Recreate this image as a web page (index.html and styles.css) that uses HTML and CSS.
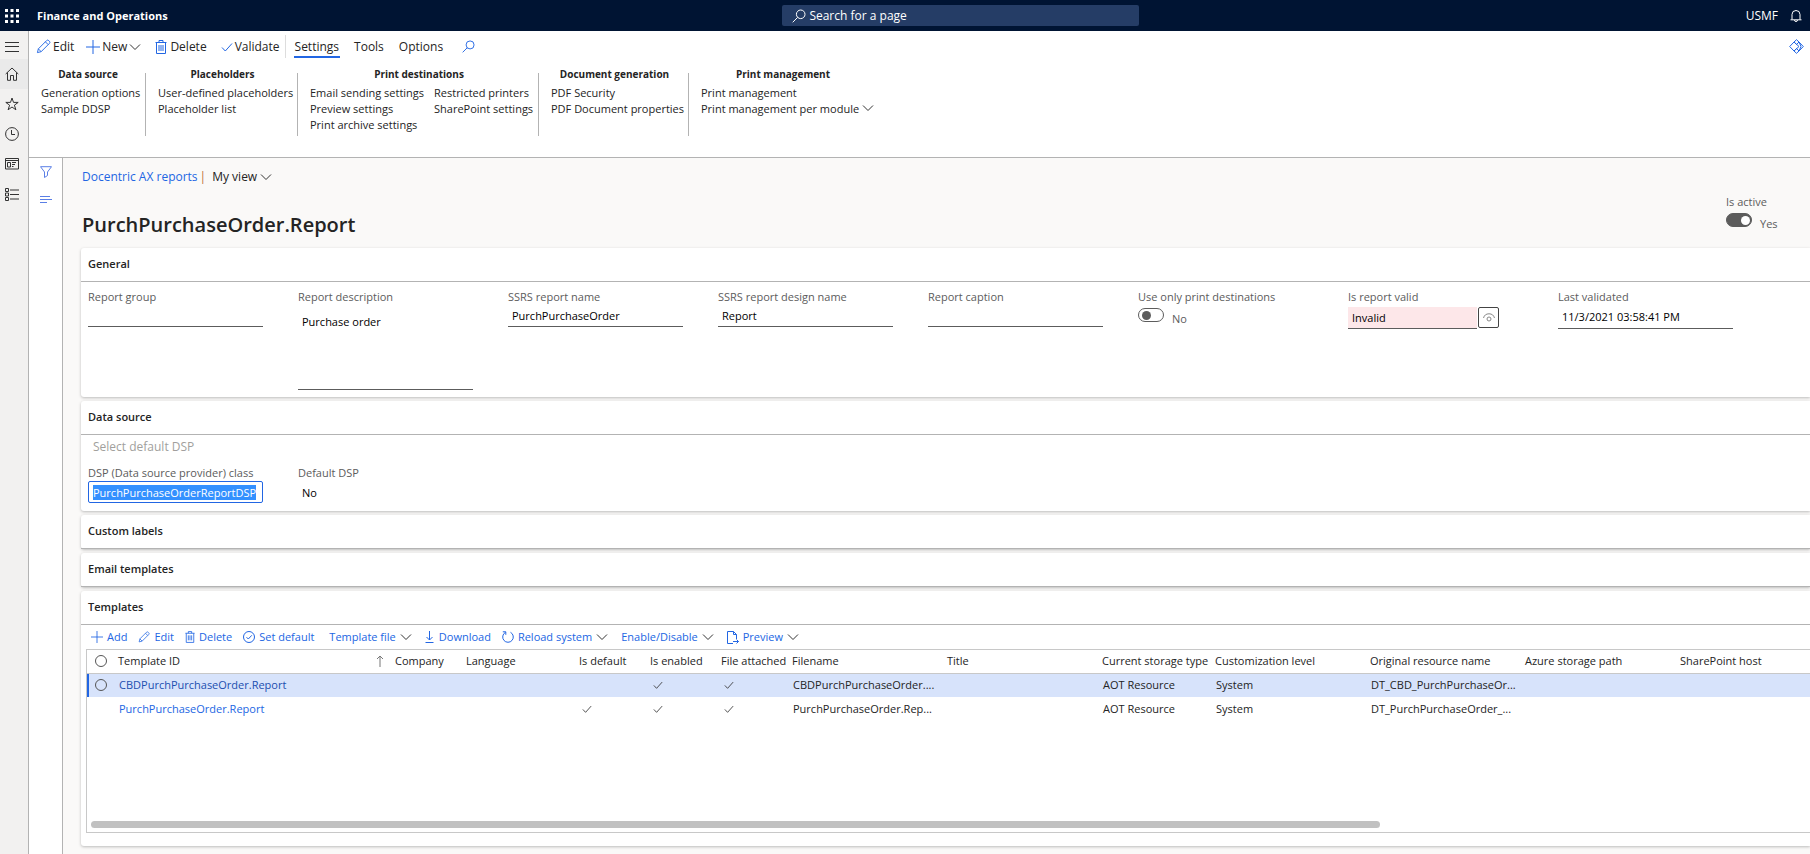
FILE: index.html
```
<!DOCTYPE html>
<html lang="en">
<head>
  <meta charset="UTF-8">
  <meta name="viewport" content="width=device-width, initial-scale=1.0">
  <title>Finance and Operations</title>
  <link rel="stylesheet" href="styles.css">
</head>

<body>

<!-- icons used more than once -->
<svg class="defs" aria-hidden="true">
  <symbol id="i-chevron" viewBox="0 0 12 12"><path d="M1 3.5l5 5 5-5"/></symbol>
  <symbol id="i-pencil" viewBox="0 0 16 16"><path d="M1.5 14.5l1-4L11.3 1.7a1.6 1.6 0 0 1 2.3 0l.7.7a1.6 1.6 0 0 1 0 2.3L5.5 13.5zM10 3l3 3M2.5 10.5l3 3"/></symbol>
  <symbol id="i-plus" viewBox="0 0 14 14"><path d="M7 0v14M0 7h14"/></symbol>
  <symbol id="i-trash" viewBox="0 0 12 14"><path d="M.5 2.5h11M4 2.5V.5h4v2M1.5 2.5v11h9v-11M4 5v6M6 5v6M8 5v6"/></symbol>
  <symbol id="i-search" viewBox="0 0 14 14"><circle cx="8.7" cy="5.3" r="4.3"/><path d="M5.7 8.3L.7 13.3"/></symbol>
  <symbol id="i-check" viewBox="0 0 12 12"><path d="M1 6.5L4.3 10 11 2.5"/></symbol>
</svg>

<header class="topbar">
  <button class="waffle" aria-label="App launcher">
    <svg width="14" height="14" viewBox="0 0 14 14"><path d="M0 0h3v3H0zM5.5 0h3v3h-3zM11 0h3v3h-3zM0 5.5h3v3H0zM5.5 5.5h3v3h-3zM11 5.5h3v3h-3zM0 11h3v3H0zM5.5 11h3v3h-3zM11 11h3v3h-3z"/></svg>
  </button>
  <span class="brand">Finance and Operations</span>
  <div class="page-search">
    <svg class="icon" width="14" height="14"><use href="#i-search"/></svg>
    <input type="text" placeholder="Search for a page" aria-label="Search for a page">
  </div>
  <div class="topbar-right">
    <button class="company">USMF</button>
    <button class="bell" aria-label="Notifications">
      <svg class="icon" width="12" height="14" viewBox="0 0 12 14"><path d="M2 10.5v-5a4 4 0 0 1 8 0v5M.5 10.8h11M4.5 11a1.5 1.5 0 0 0 3 0"/></svg>
    </button>
  </div>
</header>

<div class="shell">

  <nav class="rail">
    <button class="rail-menu" aria-label="Expand navigation">
      <svg class="icon" width="14" height="10" viewBox="0 0 14 10"><path d="M0 .5h14M0 4.5h14M0 9.5h14"/></svg>
    </button>
    <button class="rail-item active" aria-label="Home">
      <svg class="icon" width="14" height="14" viewBox="0 0 14 14"><path d="M.7 7L7 1l6.3 6M2.5 5.5v7.8h3V8.5h3v4.8h3V5.5"/></svg>
    </button>
    <button class="rail-item" aria-label="Favorites">
      <svg class="icon" width="14" height="14" viewBox="0 0 14 14"><path d="M7 1l1.5 4.4h4.7L9.4 8.2l1.5 4.6L7 10l-3.9 2.8 1.5-4.6L.8 5.4h4.7z"/></svg>
    </button>
    <button class="rail-item" aria-label="Recent">
      <svg class="icon" width="14" height="14" viewBox="0 0 14 14"><circle cx="7" cy="7" r="6.4"/><path d="M6.5 3v4.5H10"/></svg>
    </button>
    <button class="rail-item" aria-label="Workspaces">
      <svg class="icon" width="14" height="12" viewBox="0 0 14 12"><path d="M.5.5h13v10.5H.5zM.5 2.5h13M2.5 4.5h3V9h-3zM7 4.5h4M7 6.5h3M7 8.5h1.5"/></svg>
    </button>
    <button class="rail-item" aria-label="Modules">
      <svg class="icon" width="14" height="13" viewBox="0 0 14 13"><path d="M.5.5h3v3h-3zM.5 5h3v3h-3zM.5 9.5h3v3h-3zM5 2h9M5 6.5h9M5 11h9"/></svg>
    </button>
  </nav>

  <div class="page">

    <div class="action-pane">
      <div class="commands">
        <button class="cmd"><svg class="icon" width="15" height="15"><use href="#i-pencil"/></svg>Edit</button>
        <button class="cmd cmd-new"><svg class="icon" width="14" height="14"><use href="#i-plus"/></svg>New<svg class="icon chevron" width="12" height="12"><use href="#i-chevron"/></svg></button>
        <button class="cmd cmd-delete"><svg class="icon" width="12" height="14"><use href="#i-trash"/></svg>Delete</button>
        <button class="cmd cmd-validate"><svg class="icon" width="12" height="12"><use href="#i-check"/></svg>Validate</button>
        <div class="tabs">
          <button class="tab selected">Settings</button>
          <button class="tab">Tools</button>
          <button class="tab">Options</button>
        </div>
        <button class="cmd" aria-label="Search actions"><svg class="icon" width="13" height="13"><use href="#i-search"/></svg></button>
        <button class="cmd cmd-apps" aria-label="Power Apps">
          <svg class="icon" width="15" height="15" viewBox="0 0 15 15"><path d="M5 3L.7 7.5 5 12M10 3l4.3 4.5L10 12M5 3L7.5.7 10 3 7.500 5.500zM5 12l2.500 2.300L10 12 7.500 9.500zM5 3l5 4.500L5 12M10 3l2 4.500-2 4.500"/></svg>
        </button>
      </div>

      <div class="ribbon">
        <section class="group group-ds">
          <h3>Data source</h3>
          <div class="group-cols">
            <div class="links">
              <a href="#">Generation options</a>
              <a href="#">Sample DDSP</a>
            </div>
          </div>
        </section>
        <section class="group group-ph">
          <h3>Placeholders</h3>
          <div class="group-cols">
            <div class="links">
              <a href="#">User-defined placeholders</a>
              <a href="#">Placeholder list</a>
            </div>
          </div>
        </section>
        <section class="group group-pd">
          <h3>Print destinations</h3>
          <div class="group-cols">
            <div class="links">
              <a href="#">Email sending settings</a>
              <a href="#">Preview settings</a>
              <a href="#">Print archive settings</a>
            </div>
            <div class="links">
              <a href="#">Restricted printers</a>
              <a href="#">SharePoint settings</a>
            </div>
          </div>
        </section>
        <section class="group group-dg">
          <h3>Document generation</h3>
          <div class="group-cols">
            <div class="links">
              <a href="#">PDF Security</a>
              <a href="#">PDF Document properties</a>
            </div>
          </div>
        </section>
        <section class="group group-pm">
          <h3>Print management</h3>
          <div class="group-cols">
            <div class="links">
              <a href="#">Print management</a>
              <a href="#">Print management per module <svg class="icon chevron" width="12" height="12"><use href="#i-chevron"/></svg></a>
            </div>
          </div>
        </section>
      </div>
    </div>

    <div class="workarea">
      <aside class="side">
        <button aria-label="Show filters">
          <svg class="icon" width="12" height="12" viewBox="0 0 12 12"><path d="M.5.7h11L7.5 6v3.500l-3 2V6z"/></svg>
        </button>
        <button aria-label="Show list">
          <svg class="icon" width="12" height="8" viewBox="0 0 12 8"><path d="M0 .5h10M0 3.500h12M0 6.500h7"/></svg>
        </button>
      </aside>

      <main class="content">
        <div class="crumbs">
          <a href="#">Docentric AX reports</a>
          <span class="bar">|</span>
          <button class="view">My view<svg class="icon chevron" width="12" height="12"><use href="#i-chevron"/></svg></button>
        </div>

        <div class="title-row">
          <h1>PurchPurchaseOrder.Report</h1>
          <div class="field is-active">
            <label for="isActive">Is active</label>
            <div class="toggle-row"><input class="toggle" type="checkbox" id="isActive" checked><span>Yes</span></div>
          </div>
        </div>

        <section class="card">
          <h2>General</h2>
          <div class="card-body fields">
            <div class="field">
              <label for="reportGroup">Report group</label>
              <input class="text" type="text" id="reportGroup">
            </div>
            <div class="field">
              <label for="reportDescription">Report description</label>
              <textarea class="text" id="reportDescription">Purchase order</textarea>
            </div>
            <div class="field">
              <label for="ssrsName">SSRS report name</label>
              <input class="text" type="text" id="ssrsName" value="PurchPurchaseOrder">
            </div>
            <div class="field">
              <label for="ssrsDesign">SSRS report design name</label>
              <input class="text" type="text" id="ssrsDesign" value="Report">
            </div>
            <div class="field">
              <label for="caption">Report caption</label>
              <input class="text" type="text" id="caption">
            </div>
            <div class="field">
              <label for="onlyDest">Use only print destinations</label>
              <div class="toggle-row"><input class="toggle" type="checkbox" id="onlyDest"><span>No</span></div>
            </div>
            <div class="field">
              <label for="isValid">Is report valid</label>
              <div class="with-button">
                <input class="text invalid" type="text" id="isValid" value="Invalid">
                <button class="eye" aria-label="Show validation details">
                  <svg class="icon" width="12" height="10" viewBox="0 0 12 10"><path d="M.5 5a5.700 5.700 0 0 1 11 0"/><circle cx="6" cy="6" r="2"/></svg>
                </button>
              </div>
            </div>
            <div class="field">
              <label for="lastValidated">Last validated</label>
              <input class="text tall" type="text" id="lastValidated" value="11/3/2021 03:58:41 PM">
            </div>
          </div>
        </section>

        <section class="card">
          <h2>Data source</h2>
          <div class="card-body source">
            <button class="select-dsp" disabled>Select default DSP</button>
            <div class="fields">
              <div class="field">
                <label for="dspClass">DSP (Data source provider) class</label>
                <input class="text focused" type="text" id="dspClass" value="PurchPurchaseOrderReportDSP">
              </div>
              <div class="field">
                <label for="defaultDsp">Default DSP</label>
                <input class="text plain" type="text" id="defaultDsp" value="No" readonly>
              </div>
            </div>
          </div>
        </section>

        <section class="card"><h2>Custom labels</h2></section>
        <section class="card"><h2>Email templates</h2></section>

        <section class="card">
          <h2>Templates</h2>
          <div class="toolbar">
            <button class="tool"><svg class="icon" width="12" height="12"><use href="#i-plus"/></svg>Add</button>
            <button class="tool"><svg class="icon" width="12" height="12"><use href="#i-pencil"/></svg>Edit</button>
            <button class="tool"><svg class="icon" width="10" height="12"><use href="#i-trash"/></svg>Delete</button>
            <button class="tool"><svg class="icon" width="12" height="12" viewBox="0 0 12 12"><circle cx="6" cy="6" r="5.500"/><path d="M3.500 6.200l1.800 1.800 3.500-3.700"/></svg>Set default</button>
            <button class="tool tool-file tool-menu">Template file<svg class="icon chevron" width="12" height="12"><use href="#i-chevron"/></svg></button>
            <button class="tool"><svg class="icon" width="10" height="12" viewBox="0 0 10 12"><path d="M4.500 0v9M1.500 6l3 3 3-3M.5 11.500h8"/></svg>Download</button>
            <button class="tool tool-menu"><svg class="icon" width="12" height="12" viewBox="0 0 12 12"><path d="M3.500 1.300a5.300 5.300 0 1 0 5 0M.8.8h3v3"/></svg>Reload system<svg class="icon chevron" width="12" height="12"><use href="#i-chevron"/></svg></button>
            <button class="tool tool-menu">Enable/Disable<svg class="icon chevron" width="12" height="12"><use href="#i-chevron"/></svg></button>
            <button class="tool"><svg class="icon" width="12" height="13" viewBox="0 0 12 13"><path d="M9.500 8V3.500l-3-3h-6v12h5.500M6.500.5v3h3M6 10.500h5.500M9.500 8.500l2 2-2 2"/></svg>Preview<svg class="icon chevron" width="12" height="12"><use href="#i-chevron"/></svg></button>
          </div>

          <div class="grid">
            <table>
              <colgroup>
                <col class="c-radio"><col class="c-id"><col class="c-s"><col class="c-m">
                <col class="c-s"><col class="c-s"><col class="c-s"><col class="c-l"><col class="c-l">
                <col class="c-m"><col class="c-l"><col class="c-l"><col class="c-l"><col>
              </colgroup>
              <thead>
                <tr>
                  <th><input class="round" type="radio" name="all" aria-label="Select all rows"></th>
                  <th><div class="sorted">Template ID<svg class="icon" width="8" height="12" viewBox="0 0 8 12"><path d="M4 12V1M1 4l3-3 3 3"/></svg></div></th>
                  <th>Company</th>
                  <th>Language</th>
                  <th>Is default</th>
                  <th>Is enabled</th>
                  <th>File attached</th>
                  <th>Filename</th>
                  <th>Title</th>
                  <th>Current storage type</th>
                  <th>Customization level</th>
                  <th>Original resource name</th>
                  <th>Azure storage path</th>
                  <th>SharePoint host</th>
                </tr>
              </thead>
              <tbody>
                <tr class="current">
                  <td><input class="round" type="radio" name="row" aria-label="Select row"></td>
                  <td><a href="#">CBDPurchPurchaseOrder.Report</a></td>
                  <td></td>
                  <td></td>
                  <td></td>
                  <td><svg class="icon tick" width="10" height="10"><use href="#i-check"/></svg></td>
                  <td><svg class="icon tick" width="10" height="10"><use href="#i-check"/></svg></td>
                  <td>CBDPurchPurchaseOrder....</td>
                  <td></td>
                  <td>AOT Resource</td>
                  <td>System</td>
                  <td>DT_CBD_PurchPurchaseOr...</td>
                  <td></td>
                  <td></td>
                </tr>
                <tr>
                  <td></td>
                  <td><a href="#">PurchPurchaseOrder.Report</a></td>
                  <td></td>
                  <td></td>
                  <td><svg class="icon tick" width="10" height="10"><use href="#i-check"/></svg></td>
                  <td><svg class="icon tick" width="10" height="10"><use href="#i-check"/></svg></td>
                  <td><svg class="icon tick" width="10" height="10"><use href="#i-check"/></svg></td>
                  <td>PurchPurchaseOrder.Rep...</td>
                  <td></td>
                  <td>AOT Resource</td>
                  <td>System</td>
                  <td>DT_PurchPurchaseOrder_...</td>
                  <td></td>
                  <td></td>
                </tr>
              </tbody>
            </table>
            <div class="scrollbar"><div class="thumb"></div></div>
          </div>
        </section>
      </main>
    </div>
  </div>
</div>

<script>
document.getElementById('dspClass').focus();
document.getElementById('dspClass').select();
</script>

</body>
</html>
```

FILE: styles.css
```
* {
  box-sizing: border-box;
}
body {
  margin: 0;
  min-height: 100vh;
  display: flex;
  flex-direction: column;
  font-family: "Segoe UI", "Open Sans", sans-serif;
  font-size: 12px;
  line-height: 16px;
  color: #242424;
  background: #faf9f8;
  overflow-x: hidden;
}
button, input, textarea {
  font: inherit;
  color: inherit;
  margin: 0;
  padding: 0;
  border: 0;
  background: none;
}
button {
  display: inline-flex;
  align-items: center;
  white-space: nowrap;
}
a {
  color: #2266e3;
  text-decoration: none;
}
h1, h2, h3 {
  margin: 0;
}
.defs {
  position: absolute;
  width: 0;
  height: 0;
}
.icon {
  fill: none;
  stroke: currentColor;
  flex-shrink: 0;
}

/* top bar */
.topbar {
  display: grid;
  grid-template-columns: 7fr 357px 6fr;
  grid-template-areas: "left search right";
  align-items: center;
  height: 31px;
  background: #001433;
  color: #fff;
}
.waffle {
  grid-area: left;
  padding-left: 5px;
  fill: #fff;
  justify-self: start;
}
.brand {
  grid-area: left;
  padding-left: 37px;
  font-size: 11px;
  font-weight: 700;
}
.page-search {
  grid-area: search;
  display: flex;
  align-items: center;
  gap: 3px;
  height: 21px;
  padding-left: 10px;
  border-radius: 2px;
  background: #253d66;
}
.page-search input {
  flex: 1;
}
.page-search input::placeholder {
  color: #fff;
}
.topbar-right {
  grid-area: right;
  display: flex;
  justify-content: flex-end;
  gap: 12px;
  padding-right: 8px;
}

.shell {
  flex: 1;
  display: flex;
}

/* left navigation */
.rail {
  display: flex;
  flex-direction: column;
  width: 29px;
  background: #f2f1f0;
  border-right: 1px solid #b3b3b3;
  color: #333;
}
.rail button {
  height: 30px;
  padding-left: 5px;
}
.rail .rail-menu {
  height: 28px;
  padding-top: 3px;
}
.rail .active {
  background: #eaeaea;
}

.page {
  flex: 1;
  min-width: 0;
  display: flex;
  flex-direction: column;
}

/* action pane */
.action-pane {
  background: #fff;
  border-bottom: 1px solid #b3b3b3;
  height: 127px;
}
.commands {
  display: flex;
  align-items: center;
  height: 31px;
  padding: 0 6px 0 7px;
}
.cmd {
  gap: 2px;
}
.cmd .icon {
  color: #2266e3;
}
.cmd .chevron, .chevron {
  color: #333;
}
.cmd-new {
  margin-left: 12px;
}
.cmd-delete {
  margin-left: 14px;
  gap: 3px;
}
.cmd-validate {
  margin-left: 14px;
}
.cmd-apps {
  margin-left: auto;
}
.tabs {
  display: flex;
  gap: 13px;
  margin: 0 18px 0 5px;
  padding-left: 8px;
  border-left: 1px solid #ddd;
}
.tab {
  border-bottom: 2px solid transparent;
  padding: 4px 1px 1px;
}
.tab.selected {
  border-color: #2266e3;
}
.ribbon {
  display: flex;
  padding-top: 4px;
}
.group {
  position: relative;
  padding-left: 13px;
}
.group h3 {
  font-size: 10px;
  font-weight: 700;
  text-align: center;
}
.group-cols {
  display: flex;
  padding-top: 3px;
}
.links {
  display: flex;
  flex-direction: column;
  min-width: 124px;
}
.links a {
  color: #242424;
  font-size: 11px;
  white-space: nowrap;
}
.links .icon {
  vertical-align: -1px;
}
.group + .group::before {
  content: "";
  position: absolute;
  left: 0;
  top: 7px;
  height: 63px;
  border-left: 1px solid #b3b3b3;
}
.group-ds {
  width: 116px;
  padding-left: 12px;
  padding-right: 10px;
}
.group-ph {
  width: 152px;
  padding-right: 10px;
}
.group-pd {
  width: 241px;
  padding-right: 10px;
}
.group-dg {
  width: 150px;
  padding-right: 10px;
}
.group-pm {
  width: 177px;
}

/* work area */
.workarea {
  flex: 1;
  display: flex;
}
.side {
  display: flex;
  flex-direction: column;
  align-items: center;
  width: 34px;
  background: #fff;
  border-right: 1px solid #b3b3b3;
  color: #5b7fe6;
}
.side button {
  height: 28px;
}
.content {
  flex: 1;
  min-width: 0;
  padding: 11px 0 8px 18px;
}
.crumbs {
  display: flex;
  align-items: center;
  padding-left: 1px;
}
.bar {
  margin: 0 6px 0 2px;
  color: #c0703a;
}
.view {
  gap: 3px;
}
.title-row {
  display: flex;
  justify-content: space-between;
  align-items: flex-end;
  height: 63px;
  padding: 0 58px 11px 1px;
}
h1 {
  font-size: 20px;
  line-height: 24px;
  font-weight: 600;
}
.is-active.field {
  width: 26px;
  padding-bottom: 5px;
}

/* cards */
.card {
  margin-bottom: 4px;
  background: #fff;
  border-radius: 3px 0 0 3px;
  box-shadow: 0 1px 3px rgba(0, 0, 0, 0.25);
}
.card h2 {
  height: 34px;
  padding: 8px 7px;
  border-bottom: 1px solid #b3b3b3;
  font-size: 11px;
  font-weight: 600;
}
.card-body {
  padding: 7px;
}
.source {
  padding-top: 4px;
  padding-bottom: 8px;
}
.fields {
  display: flex;
  gap: 35px;
}
.field {
  width: 175px;
  flex-shrink: 0;
  font-size: 11px;
}
.field label {
  display: block;
  color: #5c5c5c;
  white-space: nowrap;
}
.text {
  display: block;
  width: 100%;
  height: 22px;
  padding: 0 4px;
  border-bottom: 1px solid #5c5c5c;
  color: #000;
}
textarea.text {
  height: 85px;
  padding-top: 9px;
  resize: none;
}
.text.tall {
  height: 24px;
}
.text.plain {
  border: 0;
}
.text.focused {
  border: 1px solid #2266e3;
  border-radius: 2px;
  outline: 0;
  caret-color: transparent;
}
.text::selection {
  background: #3390ff;
  color: #fff;
}
.with-button {
  display: flex;
  gap: 1px;
  padding-top: 2px;
}
.text.invalid {
  width: 129px;
  background: #fde7e9;
}
.eye {
  justify-content: center;
  width: 21px;
  height: 21px;
  border: 1px solid #444;
  border-radius: 2px;
  color: #888;
}
.toggle-row {
  display: flex;
  gap: 8px;
  color: #5c5c5c;
}
.toggle-row span {
  padding-top: 6px;
}
.toggle {
  appearance: none;
  display: flex;
  align-items: center;
  flex-shrink: 0;
  width: 26px;
  height: 14px;
  margin-top: 3px;
  padding: 0 3px;
  border: 1px solid #5c5c5c;
  border-radius: 7px;
}
.toggle::before {
  content: "";
  width: 9px;
  height: 9px;
  border-radius: 50%;
  background: #5c5c5c;
}
.toggle:checked {
  justify-content: flex-end;
  padding-right: 1px;
  background: #5c5c5c;
}
.toggle:checked::before {
  background: #fff;
}
.select-dsp {
  display: flex;
  height: 16px;
  margin-bottom: 10px;
  padding-left: 5px;
  font-size: 12px;
  color: #a19f9d;
}

/* templates */
.toolbar {
  display: flex;
  align-items: center;
  gap: 11px;
  height: 24px;
  padding-left: 10px;
  font-size: 11px;
  color: #2266e3;
}
.tool {
  gap: 4px;
}
.tool-file {
  margin-left: 4px;
}
.tool-menu {
  margin-right: 2px;
}
.grid {
  display: flex;
  flex-direction: column;
  height: 184px;
  margin-left: 5px;
  border: 1px solid #c8c8c8;
  border-right: 0;
}
.card:last-child {
  padding-bottom: 13px;
  margin-bottom: 0;
}
table {
  width: 100%;
  table-layout: fixed;
  border-collapse: collapse;
  font-size: 11px;
}
th, td {
  height: 24px;
  padding: 0 0 0 5px;
  text-align: left;
  white-space: nowrap;
}
th {
  height: 23px;
  padding-left: 4px;
  border-bottom: 1px solid #c8c8c8;
  font-weight: 400;
}
.c-radio { width: 27px; }
.c-id { width: 277px; }
.c-s { width: 71px; }
.c-m { width: 113px; }
.c-l { width: 155px; }
.sorted {
  display: flex;
  justify-content: space-between;
  align-items: center;
  padding-right: 7px;
}
.sorted .icon {
  color: #777;
}
.current {
  background: #d7e3fb;
}
.current td:first-child {
  box-shadow: inset 2px 0 #2266e3;
}
.current a {
  color: #1b4fb0;
}
.round {
  appearance: none;
  display: block;
  width: 12px;
  height: 12px;
  margin-left: 4px;
  border: 1px solid #555;
  border-radius: 50%;
}
td .round {
  margin-left: 3px;
}
.tick {
  display: block;
  margin-left: 2px;
  color: #333;
}
.scrollbar {
  margin: auto 0 4px;
  padding-left: 4px;
}
.thumb {
  width: 75%;
  height: 7px;
  border-radius: 4px;
  background: #c1c1c1;
}
```
